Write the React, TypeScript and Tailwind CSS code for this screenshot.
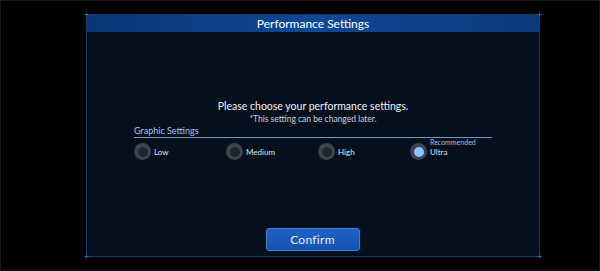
import { useState } from "react";

const options = [
  { id: "low", label: "Low" },
  { id: "medium", label: "Medium" },
  { id: "high", label: "High" },
  { id: "ultra", label: "Ultra", note: "Recommended" },
];

function Spark({ className }: { className: string }) {
  return (
    <svg className={"absolute w-[7px] h-[7px] " + className} viewBox="0 0 7 7">
      <path d="M3.5 0 L3.9 3.1 L7 3.5 L3.9 3.9 L3.5 7 L3.1 3.9 L0 3.5 L3.1 3.1 Z" fill="#3f73b8" />
    </svg>
  );
}

function Radio({ selected }: { selected: boolean }) {
  return (
    <div className="w-[17px] h-[17px] rounded-full bg-[#3b4451] flex items-center justify-center shrink-0">
      <div className={"w-[10px] h-[10px] rounded-full " + (selected ? "bg-[#8fc3ff]" : "bg-[#1e252e]")} />
    </div>
  );
}

export default function App() {
  const [quality, setQuality] = useState("ultra");

  return (
    <div
      className="w-[600px] h-[271px] bg-black border border-[#1a1a1a] pt-[13px] pl-[85px]"
      style={{ fontFamily: "Lato, 'Open Sans', sans-serif" }}
    >
      <div className="relative w-[454px] h-[243px] border border-[#173a66] bg-[#06101d] flex flex-col">
        <Spark className="-left-[4px] -top-[4px]" />
        <Spark className="-right-[4px] -top-[4px]" />
        <Spark className="-left-[4px] -bottom-[4px]" />
        <Spark className="-right-[4px] -bottom-[4px]" />

        <div className="h-[17px] bg-gradient-to-r from-[#0a3675] via-[#0f4896] to-[#0b3a7c] flex items-center justify-center">
          <span className="text-[12px] leading-none text-white">Performance Settings</span>
        </div>

        <div className="flex-1 flex flex-col px-[47px]">
          <p className="mt-[68px] text-center text-[10.5px] leading-[13px] text-[#eef2f7]">
            Please choose your performance settings.
          </p>
          <p className="mt-[1px] text-center text-[8.5px] leading-[11px] text-[#c9d2dd]">
            *This setting can be changed later.
          </p>

          <div className="border-b border-[#7393c0] pb-[1px]">
            <span className="block text-[9px] leading-[11px] text-[#a9c3e6]">Graphic Settings</span>
          </div>

          <div className="mt-[5px] grid grid-cols-[92px_92px_92px_93px] leading-none">
            {options.map((o) => (
              <button
                key={o.id}
                onClick={() => setQuality(o.id)}
                className="flex items-center gap-[3px] text-left leading-none"
              >
                <Radio selected={quality === o.id} />
                <div className="relative">
                  {o.note && (
                    <span className="absolute left-0 -top-[9px] block text-[7px] leading-none text-[#a9bcd3] whitespace-nowrap">
                      {o.note}
                    </span>
                  )}
                  <span className="block text-[8px] leading-none text-[#dfe6ee]">{o.label}</span>
                </div>
              </button>
            ))}
          </div>

          <div className="mt-auto mb-[5px] flex justify-center">
            <button className="w-[94px] h-[23px] rounded-[3px] border border-[#3f7fd8] bg-gradient-to-b from-[#1d63c8] to-[#1652ac] text-[12px] leading-none text-[#e6f0ff] tracking-[0.3px] ml-[-1px]">
              Confirm
            </button>
          </div>
        </div>
      </div>
    </div>
  );
}
